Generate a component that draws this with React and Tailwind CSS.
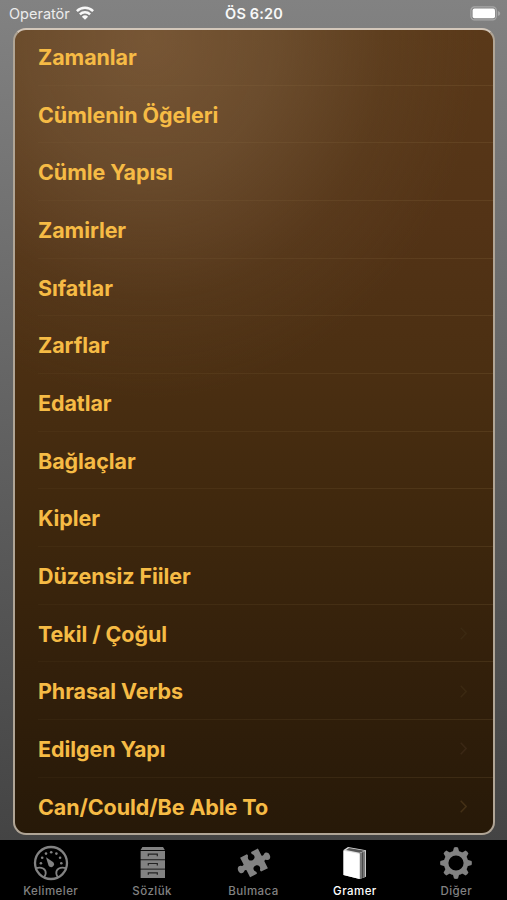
import React, { useState } from 'react';

const topics = [
  'Zamanlar',
  'Cümlenin Öğeleri',
  'Cümle Yapısı',
  'Zamirler',
  'Sıfatlar',
  'Zarflar',
  'Edatlar',
  'Bağlaçlar',
  'Kipler',
  'Düzensiz Fiiler',
  'Tekil / Çoğul',
  'Phrasal Verbs',
  'Edilgen Yapı',
  'Can/Could/Be Able To',
];

const WifiIcon = () => (
  <svg className="w-[18px] h-[14px] -mt-[2px]" viewBox="0 0 18 14" fill="none" stroke="currentColor" strokeWidth="2.5">
    <path d="M0.9 5.100a11.600 11.600 0 0 1 16.200 0" />
    <path d="M3.900 8.400a7.300 7.300 0 0 1 10.200 0" />
    <path d="M9 13.800 5.900 10.700a4.500 4.500 0 0 1 6.200 0Z" fill="currentColor" stroke="none" />
  </svg>
);

const BatteryIcon = () => (
  <svg className="w-[31px] h-[15px]" viewBox="0 0 31 15">
    <rect x="0.9" y="0.9" width="25.4" height="13" rx="3.6" fill="none" stroke="#a8a8a8" strokeWidth="1.2" />
    <rect x="2.6" y="2.6" width="22.4" height="9.6" rx="1.8" fill="#fff" />
    <path d="M27.8 4.900c1.600.6 2.400 1.400 2.400 2.500s-.8 1.900-2.400 2.500Z" fill="#a8a8a8" />
  </svg>
);

const GaugeIcon = () => (
  <svg className="w-9 h-9" viewBox="0 0 36 36" fill="currentColor">
    <circle cx="18" cy="18" r="16" fill="none" stroke="currentColor" strokeWidth="2.3" />
    {[[7.9, 18.3], [9.2, 12.7], [13, 8.6], [18.2, 7.2], [23.4, 8.6], [27.1, 12.7], [28.3, 18.3]].map(([x, y]) => (
      <circle key={x} cx={x} cy={y} r="1.300" />
    ))}
    <path d="M13 12.200 20 17a2.900 2.900 0 1 1-4.500 3.400Z" />
    <path d="M3.200 23.200c5.400-1.600 10 .8 9.500 5.300-.1 1.400-.7 2.400-1.400 3.600M32.800 23.200c-5.400-1.600-10 .8-9.500 5.300.1 1.400.7 2.400 1.400 3.600" fill="none" stroke="currentColor" strokeWidth="1.800" />
  </svg>
);

const DrawersIcon = () => (
  <svg className="w-9 h-9" viewBox="0 0 36 36" fill="currentColor">
    <path d="M8.400 2h20.600l1.800 3H6.600Z" />
    {[5.900, 15.200, 24.500].map(y => (
      <g key={y}>
        <path d={`M6.600 ${y}h24.400v8.500H6.600Z`} />
        <path d={`M14.300 ${y + 5.300}v-2h9v2`} fill="none" stroke="#222" strokeWidth="1.200" />
      </g>
    ))}
  </svg>
);

const PuzzleIcon = () => (
  <svg className="w-9 h-9" viewBox="0 0 36 36" fill="currentColor">
    <path
      transform="translate(18 17.900) rotate(-27)"
      d="M-10-11h7.600c.6 1 .5 1.900-.1 2.600-1.900 2.300-.6 5.300 2.500 5.300s4.400-3 2.500-5.300c-.6-.7-.7-1.600-.1-2.600H10v7.800c.8.900 1.700.9 2.500.2 2.200-1.900 5.100-.4 5.100 3s-2.900 4.900-5.100 3c-.8-.7-1.700-.7-2.500.2V11H2.400c-.6-1-.5-1.900.1-2.600 1.900-2.300.6-5.300-2.500-5.300s-4.400 3-2.500 5.300c.6.700.7 1.600.1 2.600H-10V3.200c-.8-.9-1.700-.9-2.500-.2-2.200 1.900-5.100.4-5.100-3s2.900-4.900 5.100-3c.8.700 1.700.7 2.500-.2Z"
    />
  </svg>
);

const BookIcon = () => (
  <svg className="w-9 h-9" viewBox="0 0 36 36">
    <path d="M6.500 5 11 2 29 5.200v26.500L22.600 34 6.500 30Z" fill="#ddd" />
    <path d="M9 5 12 3.100l16 2.700-5.300 2Z" fill="#555" />
    <path d="M22.600 8.300 28.200 6v26l-5.600 2Z" fill="#777" />
    <path d="M25.500 7.500v25.300" stroke="#444" strokeWidth="0.900" />
    <path d="M6.500 5.800 22 8.700q.6.100.6.700v24.700L6.500 30Z" fill="#fff" />
  </svg>
);

const GearIcon = () => (
  <svg className="w-9 h-9" viewBox="0 0 36 36" fill="currentColor">
    <circle cx="18" cy="18" r="9.900" fill="none" stroke="currentColor" strokeWidth="4.600" />
    {[0, 45, 90, 135, 180, 225, 270, 315].map(a => (
      <path key={a} d="M14.600 7.500 16 2.400q2-.6 4 0l1.400 5.100Z" transform={`rotate(${a} 18 18)`} />
    ))}
  </svg>
);

const tabs = [
  { name: 'Kelimeler', icon: GaugeIcon },
  { name: 'Sözlük', icon: DrawersIcon },
  { name: 'Bulmaca', icon: PuzzleIcon },
  { name: 'Gramer', icon: BookIcon },
  { name: 'Diğer', icon: GearIcon },
];

const StatusBar = () => (
  <div className="grid grid-cols-3 items-center h-[27.5px] pl-[9px] pr-[6px] text-[#f8f8f8] text-[14.5px] leading-none">
    <div className="flex items-center gap-[6px]">
      <span className="text-[#ececec]">Operatör</span>
      <WifiIcon />
    </div>
    <span className="-ml-[2px] text-center font-semibold tracking-[0.15px]">ÖS 6:20</span>
    <div className="flex justify-end -mt-px">
      <BatteryIcon />
    </div>
  </div>
);

const chevronColor = (index) => {
  if (index === 13) return 'text-[#443016]';
  if (index === 12) return 'text-[#3b2815]';
  if (index > 9) return 'text-[#3b2912]';
  return 'text-transparent';
};

const TopicRow = ({ title, index }) => (
  <li className="flex h-[57.68px] shrink-0 pl-[23px] first:-mt-[1.5px]">
    <button
      className={`relative flex flex-1 items-center justify-between pr-[26px] text-left ${
        index === topics.length - 1 ? '' : 'after:absolute after:inset-x-0 after:bottom-0 after:h-px after:bg-linear-to-r after:from-[#a98b58]/5 after:to-[#a98b58]/15'
      }`}
    >
      <span className="pt-[1.6px] text-[21.5px] leading-none font-bold tracking-[-0.08px] text-[#f6bb45] whitespace-nowrap">{title}</span>
      <svg className={`w-[7px] h-[13px] ${chevronColor(index)}`} viewBox="0 0 7 13" fill="none" stroke="currentColor" strokeWidth="1.500">
        <path d="m.7.700 5.400 5.800-5.400 5.800" />
      </svg>
    </button>
  </li>
);

const App = () => {
  const [activeTab, setActiveTab] = useState('Gramer');

  return (
    <div className="flex flex-col w-[507px] h-[900px] overflow-hidden bg-linear-to-b from-[#828282] to-[#404040] font-['Inter',sans-serif]">
      <StatusBar />

      {/* Topic list */}
      <main className="flex-1 min-h-0 pl-[13px] pr-3 pb-[5px]">
        <ul className="flex flex-col h-full overflow-hidden rounded-[13px] border-2 border-[#b0a596] border-t-[#d3c7ba] bg-[radial-gradient(ellipse_330px_360px_at_28%_1%,#8f6e4c8c_0%,#80634378_38%,#7055352e_72%,transparent_100%),linear-gradient(180deg,#5a3919_0%,#533316_24%,#4b2f12_42%,#3e270d_62%,#33200b_79%,#271908_100%)]">
          {topics.map((title, index) => (
            <TopicRow key={title} title={title} index={index} />
          ))}
        </ul>
      </main>

      {/* Tab bar */}
      <nav className="flex h-[60px] bg-black">
        {tabs.map(({ name, icon: Icon }) => (
          <button
            key={name}
            onClick={() => setActiveTab(name)}
            className={`flex flex-1 flex-col items-center pt-[5px] ${activeTab === name ? 'text-white' : 'text-[#828282]'}`}
          >
            <Icon />
            <span className="mt-1 text-[11.5px] leading-[13px] font-medium tracking-[0.45px]">{name}</span>
          </button>
        ))}
      </nav>
    </div>
  );
};

export default App;
